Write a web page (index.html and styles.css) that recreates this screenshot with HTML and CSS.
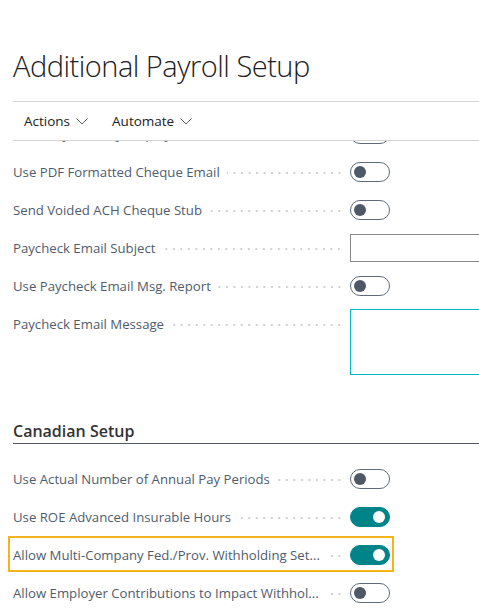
FILE: index.html
```html
<!DOCTYPE html>
<html lang="en">
<head>
<meta charset="utf-8">
<title>Additional Payroll Setup</title>
<link rel="stylesheet" href="styles.css">
</head>
<body>
<header class="page-head">
  <h1 class="page-title">Additional Payroll Setup</h1>
</header>
<nav class="action-bar">
  <button class="action">Actions <svg class="chev" viewBox="0 0 12 7" width="12" height="7"><path d="M0.5 0.5 L6 6 L11.5 0.5" fill="none" stroke="#605e5c" stroke-width="1"/></svg></button>
  <button class="action">Automate <svg class="chev" viewBox="0 0 12 7" width="12" height="7"><path d="M0.5 0.5 L6 6 L11.5 0.5" fill="none" stroke="#605e5c" stroke-width="1"/></svg></button>
</nav>
<main class="content">
  <div class="scroll">
    <section class="group">
      <div class="row"><span class="label">Send Paycheck by Employee Preference</span><span class="leader"></span><span class="toggle"></span></div>
      <div class="row"><span class="label">Use PDF Formatted Cheque Email</span><span class="leader"></span><span class="toggle"></span></div>
      <div class="row"><span class="label">Send Voided ACH Cheque Stub</span><span class="leader"></span><span class="toggle"></span></div>
      <div class="row"><span class="label">Paycheck Email Subject</span><span class="leader"></span><span class="textbox"></span></div>
      <div class="row"><span class="label">Use Paycheck Email Msg. Report</span><span class="leader"></span><span class="toggle"></span></div>
      <div class="row row-tall"><span class="label">Paycheck Email Message</span><span class="leader"></span><span class="textarea"></span></div>
    </section>
    <section class="group group-ca">
      <h2 class="group-title">Canadian Setup</h2>
      <div class="row"><span class="label">Use Actual Number of Annual Pay Periods</span><span class="leader"></span><span class="toggle"></span></div>
      <div class="row"><span class="label">Use ROE Advanced Insurable Hours</span><span class="leader"></span><span class="toggle on"></span></div>
      <div class="row focused"><span class="label">Allow Multi-Company Fed./Prov. Withholding Set...</span><span class="leader"></span><span class="toggle on"></span></div>
      <div class="row"><span class="label">Allow Employer Contributions to Impact Withhol...</span><span class="leader"></span><span class="toggle"></span></div>
    </section>
  </div>
</main>
</body>
</html>
```
FILE: styles.css
```css
html, body {
  margin: 0;
  padding: 0;
  background: #ffffff;
  width: 479px;
  height: 614px;
  overflow: hidden;
  font-family: "Open Sans", "Noto Sans", sans-serif;
}

.page-head {
  padding: 46px 0 0 13px;
}

.page-title {
  margin: 0;
  font-size: 29px;
  font-weight: 300;
  line-height: 40px;
  color: #212121;
  letter-spacing: -0.5px;
}

.action-bar {
  margin: 15px 0 0 13px;
  height: 38px;
  border-top: 1px solid #d4d4d4;
  border-bottom: 1px solid #d4d4d4;
  display: flex;
  align-items: center;
  gap: 24px;
  padding-left: 11px;
}

.action {
  border: 0;
  background: none;
  padding: 0;
  font-family: inherit;
  font-size: 13.5px;
  color: #212121;
  display: flex;
  align-items: center;
  gap: 6px;
}

.chev {
  display: block;
  margin-top: 1px;
}

.content {
  height: 473px;
  overflow: hidden;
  padding-left: 13px;
}

.scroll {
  margin-top: -26px;
}

.row {
  position: relative;
  height: 38px;
  display: flex;
  align-items: center;
  width: 377px;
}

.label {
  font-size: 13.2px;
  color: #505c6d;
  white-space: nowrap;
  flex: none;
}

.leader {
  flex: 1;
  height: 2px;
  margin: 2px 7px 0 7px;
  background-image: radial-gradient(circle, #cfcfcf 0.9px, transparent 1.1px);
  background-size: 7.5px 2px;
  background-repeat: repeat-x;
  background-position: right center;
}

.toggle {
  position: relative;
  flex: none;
  width: 38px;
  height: 18px;
  border: 1px solid #5f6b7a;
  border-radius: 10px;
  box-sizing: content-box;
}

.toggle::after {
  content: "";
  position: absolute;
  left: 3px;
  top: 3px;
  width: 12px;
  height: 12px;
  border-radius: 50%;
  background: #4d5869;
}

.toggle.on {
  background: #00848a;
  border-color: #00848a;
}

.toggle.on::after {
  left: auto;
  right: 4px;
  background: #ffffff;
}

.textbox {
  flex: none;
  width: 200px;
  height: 26px;
  margin-right: -162px;
  border: 1px solid #8a8886;
}

.row-tall {
  height: 76px;
  align-items: flex-start;
}

.row-tall .label {
  margin-top: 10px;
}

.row-tall .leader {
  margin-top: 19px;
}

.textarea {
  flex: none;
  width: 200px;
  height: 64px;
  margin-top: 4px;
  margin-right: -162px;
  border: 1px solid #00b7c3;
}

.group-ca {
  margin-top: 38px;
}

.group-title {
  margin: 0 0 16px 0;
  font-size: 16px;
  font-weight: 600;
  line-height: 24px;
  color: #333333;
  border-bottom: 1px solid #505c6d;
  padding-bottom: 0;
  width: 466px;
}

.focused::after {
  content: "";
  position: absolute;
  left: -5px;
  right: -4px;
  top: 0;
  bottom: 2px;
  border: 2px solid #f5b31c;
  pointer-events: none;
}
```
